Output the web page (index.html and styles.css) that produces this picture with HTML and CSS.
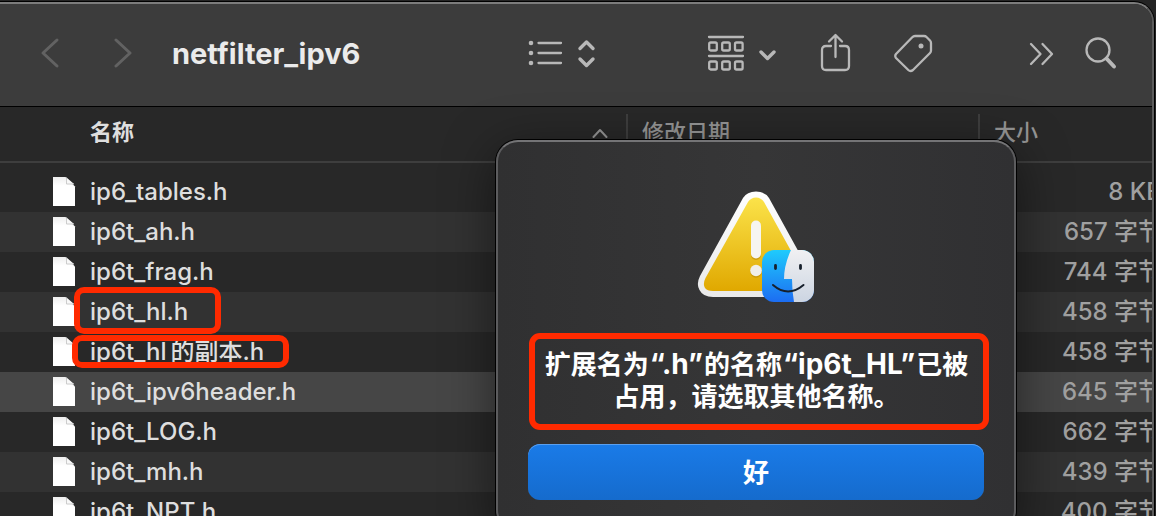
FILE: index.html
```html
<!DOCTYPE html>
<html lang="zh-CN">
<head>
<meta charset="utf-8">
<title>netfilter_ipv6</title>
<link rel="stylesheet" href="styles.css">
</head>
<body>
<svg class="defs" width="0" height="0" aria-hidden="true">
  <defs>
    <linearGradient id="page-shade" x1="0" y1="0" x2="0" y2="1">
      <stop offset="0" stop-color="#eeeeee"/><stop offset="0.3" stop-color="#ffffff"/>
    </linearGradient>
    <symbol id="file" viewBox="0 0 24 32">
      <path d="M1 1h12.500L23 10.500v19.500H1z" fill="url(#page-shade)"/>
      <path d="M14.500 1.500V8H22" fill="#f8f8f8" stroke="#cccccc" stroke-width="1"/>
    </symbol>
  </defs>
</svg>
<main class="window">
  <header class="toolbar">
    <nav class="history">
      <button class="tool dim" aria-label="后退"><svg width="20" height="32" viewBox="0 0 20 32"><path d="M17 3L3 16L17 29"/></svg></button>
      <button class="tool dim" aria-label="前进"><svg width="20" height="32" viewBox="0 0 20 32"><path d="M2 3L16 16L2 29"/></svg></button>
    </nav>
    <h1 class="title">netfilter_ipv6</h1>
    <div class="tools">
      <button class="tool view" aria-label="列表视图">
        <svg width="68" height="32" viewBox="0 0 68 32">
          <g class="solid"><circle cx="3" cy="6" r="2.300"/><circle cx="3" cy="16" r="2.300"/><circle cx="3" cy="26" r="2.300"/></g>
          <path d="M10.500 6H33M10.500 16H33M10.500 26H33"/>
          <path class="bold" d="M52 11.500L58.500 5L65 11.500M52 22L58.500 28.500L65 22"/>
        </svg>
      </button>
      <button class="tool group" aria-label="群组">
        <svg width="70" height="38" viewBox="0 0 70 38">
          <path d="M2 3H36M2 22H36"/>
          <g><rect x="2.200" y="8.500" width="7.600" height="8" rx="1.500"/><rect x="15.200" y="8.500" width="7.600" height="8" rx="1.500"/><rect x="28" y="8.500" width="7.600" height="8" rx="1.500"/><rect x="2.200" y="27.500" width="7.600" height="8" rx="1.500"/><rect x="15.200" y="27.500" width="7.600" height="8" rx="1.500"/><rect x="28" y="27.500" width="7.600" height="8" rx="1.500"/></g>
          <path class="bold" d="M54 18L60.500 24.500L67 18"/>
        </svg>
      </button>
      <button class="tool share" aria-label="共享">
        <svg width="32" height="40" viewBox="0 0 32 40"><path d="M11 13H6Q2 13 2 17V33Q2 37 6 37H25Q29 37 29 33V17Q29 13 25 13H20M15.500 24V2.500M9 8.500L15.500 2L22 8.500"/></svg>
      </button>
      <button class="tool tag" aria-label="标签">
        <svg width="40" height="40" viewBox="0 0 40 40"><path d="M22 3H31Q32.500 3 33.500 4L37 7.500Q38 8.500 38 10V17.500Q38 19 37 20L20 37Q17.500 39 15.300 37L3 25Q1.500 23 3 21L19 4.500Q20.500 3 22 3Z"/><circle class="solid" cx="28" cy="13" r="2.500"/></svg>
      </button>
      <button class="tool more" aria-label="更多">
        <svg width="28" height="28" viewBox="0 0 28 28"><path d="M3 5L12.500 15L3 25M14.500 5L24 15L14.500 25"/></svg>
      </button>
      <button class="tool" aria-label="搜索">
        <svg width="34" height="34" viewBox="0 0 34 34"><circle cx="14" cy="14" r="11.500"/><path class="heavy" d="M22.500 22.500L30 30.500"/></svg>
      </button>
    </div>
  </header>

  <table class="files">
    <colgroup><col class="c-name"><col class="c-date"><col class="c-size"></colgroup>
    <thead>
      <tr>
        <th class="sorted"><span class="sort">名称<svg width="18" height="12" viewBox="0 0 18 12"><path d="M2.500 11L9 4L15.500 11"/></svg></span></th>
        <th><span class="label">修改日期</span></th>
        <th><span class="label">大小</span></th>
      </tr>
    </thead>
    <tbody>
      <tr class="spacer"><td colspan="3"></td></tr>
      <tr><td class="name"><svg class="icon"><use href="#file"/></svg>ip6_tables.h</td><td></td><td class="size">8 KB</td></tr>
      <tr><td class="name"><svg class="icon"><use href="#file"/></svg>ip6t_ah.h</td><td></td><td class="size">657 字节</td></tr>
      <tr><td class="name"><svg class="icon"><use href="#file"/></svg>ip6t_frag.h</td><td></td><td class="size">744 字节</td></tr>
      <tr><td class="name"><svg class="icon"><use href="#file"/></svg>ip6t_hl.h<i class="mark mark-a"></i></td><td></td><td class="size">458 字节</td></tr>
      <tr><td class="name"><svg class="icon"><use href="#file"/></svg>ip6t_hl<span class="cjk">的副本</span>.h<i class="mark mark-b"></i></td><td></td><td class="size">458 字节</td></tr>
      <tr class="current"><td class="name"><svg class="icon"><use href="#file"/></svg>ip6t_ipv6header.h</td><td></td><td class="size">645 字节</td></tr>
      <tr><td class="name"><svg class="icon"><use href="#file"/></svg>ip6t_LOG.h</td><td></td><td class="size">662 字节</td></tr>
      <tr><td class="name"><svg class="icon"><use href="#file"/></svg>ip6t_mh.h</td><td></td><td class="size">439 字节</td></tr>
      <tr><td class="name"><svg class="icon"><use href="#file"/></svg>ip6t_NPT.h</td><td></td><td class="size">400 字节</td></tr>
    </tbody>
  </table>
</main>

<section class="dialog" role="alertdialog" aria-labelledby="message">
  <svg class="alert" width="120" height="116" viewBox="0 0 120 116" aria-hidden="true">
    <defs>
      <linearGradient id="gold" x1="0" y1="0" x2="0" y2="1"><stop offset="0" stop-color="#fbe34a"/><stop offset="1" stop-color="#e0a800"/></linearGradient>
      <linearGradient id="rim" x1="0" y1="0" x2="0" y2="1"><stop offset="0" stop-color="#ffffff"/><stop offset="1" stop-color="#e9e9e9"/></linearGradient>
      <linearGradient id="blue" x1="0" y1="0" x2="0" y2="1"><stop offset="0" stop-color="#1fcbfc"/><stop offset="1" stop-color="#1c6df2"/></linearGradient>
      <linearGradient id="silver" x1="0" y1="0" x2="0" y2="1"><stop offset="0" stop-color="#f0f0f2"/><stop offset="1" stop-color="#ccd5e2"/></linearGradient>
      <clipPath id="tile"><rect x="66" y="60" width="52" height="52" rx="12"/></clipPath>
    </defs>
    <path d="M47 8Q51 1.500 60 1.500Q69 1.500 73 8L116 86Q120 94 116 100Q112 107 103 107H17Q7 107 3.500 100Q0 94 4 86Z" fill="url(#rim)"/>
    <path d="M52 12Q55 7.500 60 7.500Q65 7.500 68 12L110 88Q113 94 110 98Q108 101 103 101H17Q11 101 9 98Q6.500 94 9.500 88Z" fill="url(#gold)"/>
    <rect x="55" y="32" width="10" height="38" rx="5" fill="#b98a08" opacity=".6"/>
    <rect x="55" y="30.500" width="10" height="38" rx="5" fill="#f6f5f0"/>
    <circle cx="60" cy="82" r="5.800" fill="#b98a08" opacity=".6"/>
    <circle cx="60" cy="80.500" r="5.800" fill="#f0eee8"/>
    <g clip-path="url(#tile)">
      <rect x="66" y="60" width="52" height="52" fill="url(#blue)"/>
      <path d="M95 60Q88 75 88 89H96Q96 101 98 112H118V60Z" fill="url(#silver)"/>
    </g>
    <path d="M77 95Q92 108 107.500 95" fill="none" stroke="#17202c" stroke-width="2" stroke-linecap="round"/>
    <path d="M79.500 75.500V78.500M104.500 75.500V78.500" fill="none" stroke="#17202c" stroke-width="2.800" stroke-linecap="round"/>
  </svg>
  <p class="message" id="message">扩展名为<span class="quoted">“.h”</span>的名称<span class="quoted">“ip6t_HL”</span>已被占用，请选取其他名称。</p>
  <button class="ok">好</button>
</section>
</body>
</html>
```
FILE: styles.css
```css
* { box-sizing: border-box; }

body {
  margin: 0;
  height: 100vh;
  overflow: hidden;
  display: flex;
  position: relative;
  padding: 2px 2px 0 0;
  background: #242424;
  color: #dedede;
  font-family: Inter, "Noto Sans CJK SC", sans-serif;
}

.defs { position: absolute; }

button {
  border: 0;
  padding: 0;
  background: none;
  font: inherit;
}

.window {
  flex: 1;
  min-width: 0;
  overflow: hidden;
  border-top: 2px solid #7c7c7c;
  border-right: 2px solid #5c5c5c;
  border-top-right-radius: 20px;
  background: #282828;
  box-shadow: 0 0 0 1px #000;
}

.toolbar {
  display: flex;
  align-items: center;
  height: 103px;
  padding: 0 34px 4px 40px;
  border-bottom: 1px solid #000;
  background: #3c3c3c;
}

.history { display: flex; gap: 54px; }

.title {
  flex: 1;
  margin: 0 0 0 38px;
  padding-top: 2px;
  color: #ebebeb;
  font-size: 29px;
  line-height: 40px;
  font-weight: 700;
}

.tools { display: flex; align-items: center; }

.tool { display: flex; flex: none; }
.tool svg, .sort svg {
  fill: none;
  stroke: #b8b8b8;
  stroke-width: 2.3;
  stroke-linecap: round;
  stroke-linejoin: round;
}
.sort svg { stroke: #959595; stroke-width: 2; }
.tool.dim svg { stroke: #626262; stroke-width: 3; }
.tool svg .solid { fill: #b8b8b8; stroke: none; }
.tool svg .bold { stroke-width: 3.4; }
.tool svg .heavy { stroke-width: 4; }
.view { margin-right: 111px; }
.group { margin-right: 43px; }
.share { margin-right: 41px; }
.tag { margin-right: 95px; }
.more { margin-right: 28px; }

.files {
  width: calc(100% + 16px);
  table-layout: fixed;
  border-collapse: collapse;
}
.c-name { width: 626px; }
.c-date { width: 352px; }

th {
  height: 55px;
  padding: 0;
  border-bottom: 2px solid #3e3e3e;
  color: #959595;
  font-size: 22px;
  line-height: 26px;
  font-weight: 500;
  text-align: left;
  vertical-align: top;
}
th .label {
  display: block;
  margin-top: 7px;
  padding: 5px 0 4px 14px;
  border-left: 2px solid #3e3e3e;
}
.sorted { color: #dedede; font-weight: 700; }
.sort {
  display: flex;
  align-items: center;
  justify-content: space-between;
  padding: 12px 17px 0 90px;
}

td { padding: 0; height: 40px; }
.spacer td { height: 10px; }
tbody tr:nth-child(odd) { background: #323232; }
tbody tr.spacer { background: none; }
tbody tr.current { background: #464646; }

.name {
  position: relative;
  padding-left: 52px;
  font-size: 24px;
  line-height: 38px;
  font-weight: 500;
  white-space: nowrap;
}
.icon {
  width: 24px;
  height: 32px;
  margin: 0 14px 2px 0;
  vertical-align: middle;
}
.cjk { margin-left: 4px; }
.size {
  padding-right: 6px;
  color: #a0a0a0;
  font-size: 24px;
  line-height: 38px;
  font-weight: 500;
  text-align: right;
  white-space: nowrap;
}

.mark {
  position: absolute;
  border: 6px solid #ff2a00;
  border-radius: 10px;
}
.mark-a { left: 74px; top: -5px; width: 147px; height: 47px; }
.mark-b { left: 72px; top: 3px; width: 217px; height: 33px; }

.dialog {
  position: absolute;
  left: 496px;
  top: 140px;
  width: 520px;
  display: flex;
  flex-direction: column;
  padding: 48px 30px 30px;
  border: 2px solid #5c5c5e;
  border-top-color: #747476;
  border-radius: 22px;
  background: linear-gradient(90deg, #303031, #363637 50%, #303032);
  box-shadow: 0 0 0 1px #000, 0 12px 50px rgba(0, 0, 0, 0.5);
}
.alert { align-self: center; }
.message {
  margin: 27px -5px 14px 1px;
  padding: 10px 7px 11px 2px;
  border: 6px solid #ff2a00;
  border-radius: 11px;
  color: #fff;
  font-size: 26px;
  line-height: 32px;
  font-weight: 700;
  text-align: center;
}
.quoted {
  margin: 0 1px;
  font-size: 28px;
  font-weight: 700;
  line-height: 28px;
}
.ok {
  height: 56px;
  padding-bottom: 4px;
  border-radius: 12px;
  background: linear-gradient(#1a7be8, #156bcd);
  box-shadow: inset 0 1px 0 #5a9fee;
  color: #fff;
  font-size: 26px;
  font-weight: 600;
}
```
